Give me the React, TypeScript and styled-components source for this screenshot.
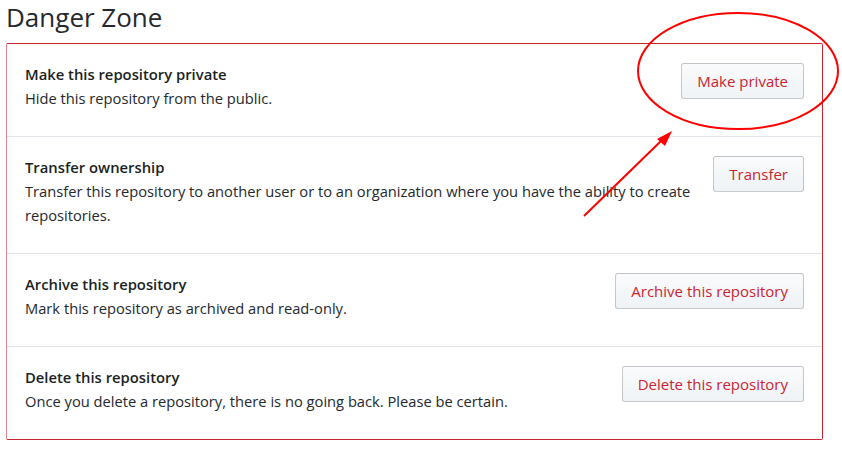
import React from "react";
import styled, { createGlobalStyle } from "styled-components";

const Global = createGlobalStyle`
  html, body { margin: 0; padding: 0; background: #ffffff; }
  body { font-family: "Open Sans", "Noto Sans", sans-serif; color: #24292e; }
`;

const Page = styled.div`
  position: relative;
  width: 842px;
  height: 450px;
  padding: 0 19px 0 6px;
  box-sizing: border-box;
  overflow: hidden;
`;

const Heading = styled.h2`
  margin: 0;
  padding-top: 1px;
  height: 42px;
  font-size: 26px;
  font-weight: 400;
  line-height: 32px;
  color: #24292e;
`;

const Box = styled.div`
  border: 1px solid #cb2431;
  border-left-color: #e0848c;
  border-radius: 2px;
  width: 817px;
  box-sizing: border-box;
`;

const Row = styled.div`
  display: flex;
  align-items: flex-start;
  justify-content: space-between;
  gap: 10px;
  padding: 18px 18px 26px 18px;
  & + & {
    border-top: 1px solid #e1e4e8;
  }
`;

const Info = styled.div`
  flex: 1;
  min-width: 0;
`;

const Title = styled.div`
  font-size: 14.8px;
  font-weight: 600;
  line-height: 24px;
  color: #1b1f23;
`;

const Desc = styled.div`
  font-size: 14.7px;
  line-height: 24px;
  color: #24292e;
`;

const Button = styled.button`
  flex: none;
  margin-top: 1px;
  height: 36px;
  padding: 0 15px;
  font-family: inherit;
  font-size: 15px;
  color: #cb2431;
  background: linear-gradient(#fafbfc, #eff3f6);
  border: 1px solid rgba(27, 31, 35, 0.22);
  border-radius: 3px;
  cursor: pointer;
`;

const Overlay = styled.svg`
  position: absolute;
  left: 0;
  top: 0;
  pointer-events: none;
`;

const rows = [
  {
    title: "Make this repository private",
    desc: "Hide this repository from the public.",
    action: "Make private",
  },
  {
    title: "Transfer ownership",
    desc: "Transfer this repository to another user or to an organization where you have the ability to create repositories.",
    action: "Transfer",
  },
  {
    title: "Archive this repository",
    desc: "Mark this repository as archived and read-only.",
    action: "Archive this repository",
  },
  {
    title: "Delete this repository",
    desc: "Once you delete a repository, there is no going back. Please be certain.",
    action: "Delete this repository",
  },
];

export default function App() {
  return (
    <>
      <Global />
      <Page>
        <Heading>Danger Zone</Heading>
        <Box>
          {rows.map((r) => (
            <Row key={r.title}>
              <Info>
                <Title>{r.title}</Title>
                <Desc>{r.desc}</Desc>
              </Info>
              <Button>{r.action}</Button>
            </Row>
          ))}
        </Box>
        <Overlay width="842" height="450" viewBox="0 0 842 450">
          <ellipse cx="738" cy="71" rx="100" ry="58" fill="none" stroke="#ff0000" strokeWidth="2" />
          <line x1="584" y1="216" x2="662" y2="140" stroke="#ff0000" strokeWidth="2" />
          <polygon points="672,131 657,139 665,146" fill="#ff0000" />
        </Overlay>
      </Page>
    </>
  );
}
